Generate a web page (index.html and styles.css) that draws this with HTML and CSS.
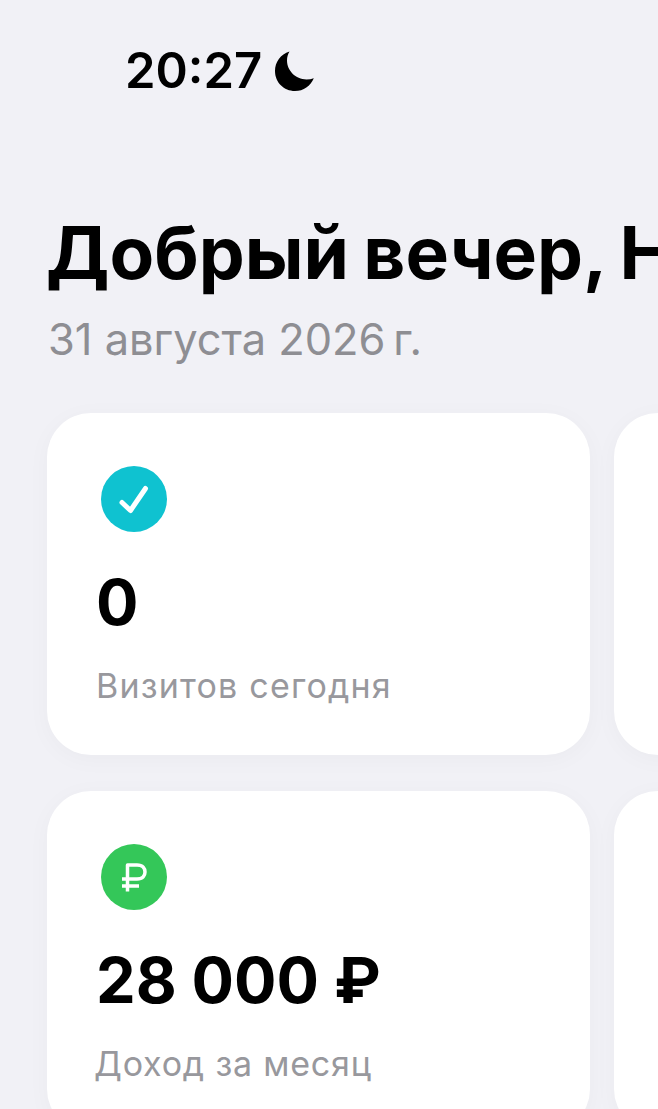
FILE: index.html
```html
<!DOCTYPE html>
<html lang="ru">
<head>
    <meta charset="UTF-8">
    <meta name="viewport" content="width=device-width, initial-scale=1.0">
    <title>Главная</title>

    <link rel="stylesheet" href="styles.css">
</head>
<body>
    <div class="status-bar">
        <span class="status-time">20:27</span>
        <svg class="status-moon" viewBox="0 0 40 40">
            <path d="M14.5 0.5C5.5 3.5 0 11 0 20c0 11.5 9 20 20 20 8.5 0 15.5-5 18.8-12.8C36.5 28 34 28.4 31.5 28.4 20.5 28.4 12 19.5 12 9.5 12 6.2 12.9 3 14.5 0.5z"/>
        </svg>
    </div>

    <div class="header">
        <h1 class="greeting">Добрый вечер, Н</h1>
        <p class="date">31 августа 2026&#8201;г.</p>
    </div>

    <div class="cards">
        <div class="card">
            <div class="card-icon icon-teal">
                <svg viewBox="0 0 66 66">
                    <path class="icon-stroke" d="M21 36.500 L29.500 44.500 L44.500 22.500"/>
                </svg>
            </div>
            <div class="card-value">0</div>
            <div class="card-label">Визитов сегодня</div>
        </div>
        <div class="card"></div>
        <div class="card">
            <div class="card-icon icon-green">
                <svg viewBox="0 0 66 66">
                    <path class="icon-stroke thin" d="M26.500 47.500 V21 H36 C42 21 44 24.500 44 28 C44 31.500 42 35 36 35 H21 M21 42 H38"/>
                </svg>
            </div>
            <div class="card-value">28 000 ₽</div>
            <div class="card-label card-label-tight">Доход за месяц</div>
        </div>
        <div class="card"></div>
    </div>
</body>
</html>
```

FILE: styles.css
```css
html, body {
    height: 100%;
}

body {
    margin: 0;
    padding: 0;
    overflow: hidden;
    font-family: Inter, "Noto Sans", sans-serif;
    background-color: #f1f1f6;
    color: #000;
}

.status-bar {
    display: flex;
    align-items: center;
    height: 48px;
    padding: 47px 0 0 125px;
}

.status-time {
    font-size: 49px;
    line-height: 48px;
    font-weight: 600;
}

.status-moon {
    width: 40px;
    height: 40px;
    margin-left: 13px;
}

.header {
    padding: 118px 0 0 46px;
    white-space: nowrap;
}

.greeting {
    margin: 0;
    font-size: 73px;
    line-height: 80px;
    font-weight: 700;
    word-spacing: -3px;
}

.date {
    margin: 22px 0 0 2px;
    font-size: 43.4px;
    line-height: 48px;
    color: #8e8e93;
}

.cards {
    display: grid;
    grid-template-columns: 543px 543px;
    grid-auto-rows: 342px;
    gap: 36px 24px;
    margin: 50px 0 0 47px;
}

.card {
    padding: 53px 49px 0;
    background-color: #fff;
    border-radius: 44px;
    box-shadow: 0 4px 24px rgba(0, 0, 0, 0.03);
}

.card-icon {
    width: 66px;
    height: 66px;
    margin-left: 5px;
    border-radius: 50%;
}

.card-icon svg {
    display: block;
}

.icon-teal {
    background-color: #0fc2d0;
}

.icon-green {
    background-color: #34c759;
}

.icon-stroke {
    fill: none;
    stroke: #fff;
    stroke-width: 5;
    stroke-linecap: round;
    stroke-linejoin: round;
}

.icon-stroke.thin {
    stroke-width: 3.5;
    stroke-linecap: butt;
}

.card-value {
    margin-top: 30px;
    font-size: 63px;
    line-height: 80px;
    font-weight: 700;
}

.card-label {
    margin-top: 22px;
    font-size: 34px;
    line-height: 44px;
    letter-spacing: 1.2px;
    color: #98989d;
}

.card-label-tight {
    margin-left: -2px;
    letter-spacing: 0.8px;
}
```
